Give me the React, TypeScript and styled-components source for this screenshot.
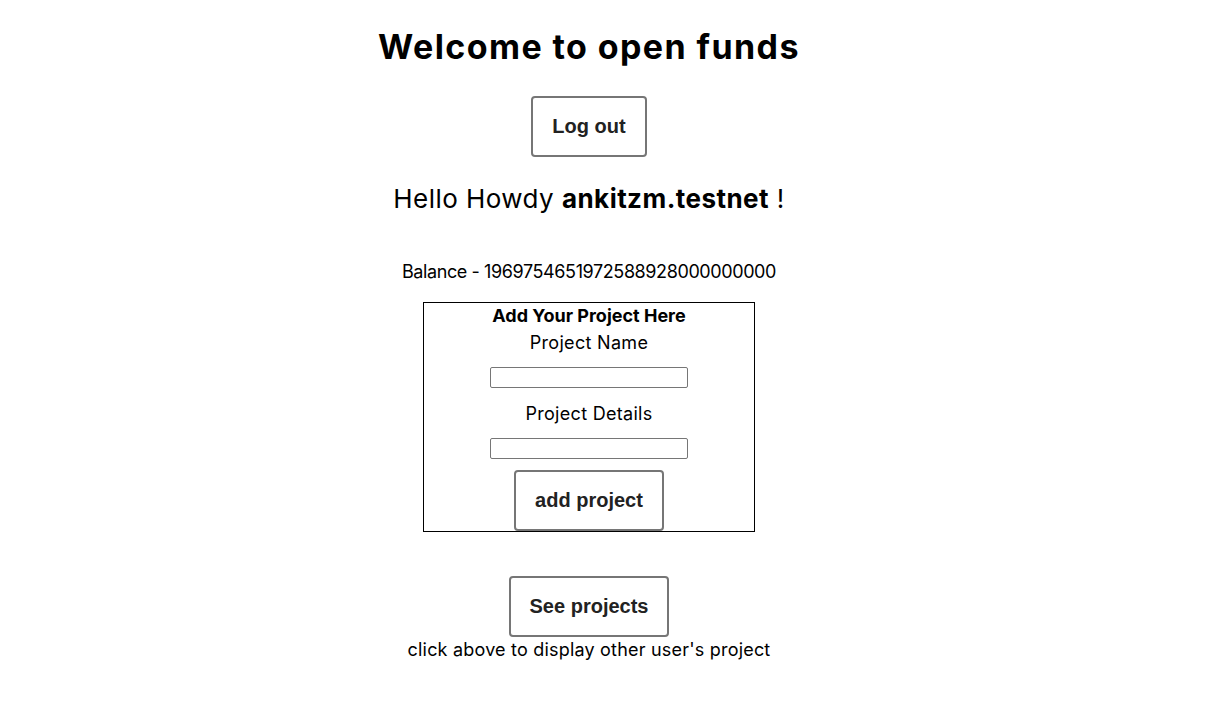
import React from "react";
import styled, { createGlobalStyle } from "styled-components";

const GlobalStyle = createGlobalStyle`
  body {
    margin: 0;
    background: #ffffff;
    color: #000000;
    font-family: Inter, "Noto Sans", sans-serif;
  }
`;

const Page = styled.main`
  display: flex;
  flex-direction: column;
  align-items: center;
  padding: 27px 30px 0 0;
`;

const Title = styled.h1`
  margin: 0 0 29px;
  font-size: 34px;
  line-height: 40px;
  font-weight: 700;
  letter-spacing: 1.4px;
`;

const ActionButton = styled.button<{ $mt?: number }>`
  margin-top: ${(p) => p.$mt ?? 0}px;
  height: 61px;
  padding: 0 19px;
  background: #ffffff;
  border: 2px solid #767676;
  border-radius: 4px;
  color: #222222;
  font-family: "Liberation Sans", Arial, sans-serif;
  font-size: 20px;
  font-weight: 700;
  cursor: pointer;
`;

const Greeting = styled.p`
  margin: 24px 0 0;
  font-size: 26px;
  line-height: 36px;
  font-weight: 400;
  letter-spacing: 0.45px;
  b {
    font-weight: 700;
  }
`;

const Balance = styled.p`
  margin: 43px 0 0;
  font-size: 18px;
  line-height: 24px;
  letter-spacing: -0.4px;
`;

const FormBox = styled.form`
  margin-top: 18px;
  width: 332px;
  box-sizing: border-box;
  border: 1px solid #000000;
  display: flex;
  flex-direction: column;
  align-items: center;
`;

const FormTitle = styled.div`
  font-size: 18px;
  line-height: 26px;
  font-weight: 700;
`;

const Label = styled.label<{ $mt?: number }>`
  margin-top: ${(p) => p.$mt ?? 0}px;
  padding-top: 1px;
  font-size: 18px;
  line-height: 25px;
  letter-spacing: 0.3px;
`;

const Input = styled.input`
  margin-top: 12px;
  width: 198px;
  height: 21px;
  box-sizing: border-box;
  border: 1px solid #767676;
  border-radius: 2px;
  padding: 1px 2px;
`;

const Hint = styled.p`
  margin: 1px 0 0;
  font-size: 18px;
  line-height: 24px;
  letter-spacing: 0.2px;
`;

export default function App() {
  return (
    <>
      <GlobalStyle />
      <Page>
        <Title>Welcome to open funds</Title>
        <ActionButton>Log out</ActionButton>
        <Greeting>
          Hello Howdy <b>ankitzm.testnet</b> !
        </Greeting>
        <Balance>Balance - 1969754651972588928000000000</Balance>
        <FormBox onSubmit={(e) => e.preventDefault()}>
          <FormTitle>Add Your Project Here</FormTitle>
          <Label>Project Name</Label>
          <Input type="text" />
          <Label $mt={12}>Project Details</Label>
          <Input type="text" />
          <ActionButton $mt={11} type="submit">add project</ActionButton>
        </FormBox>
        <ActionButton $mt={44}>See projects</ActionButton>
        <Hint>click above to display other user's project</Hint>
      </Page>
    </>
  );
}
